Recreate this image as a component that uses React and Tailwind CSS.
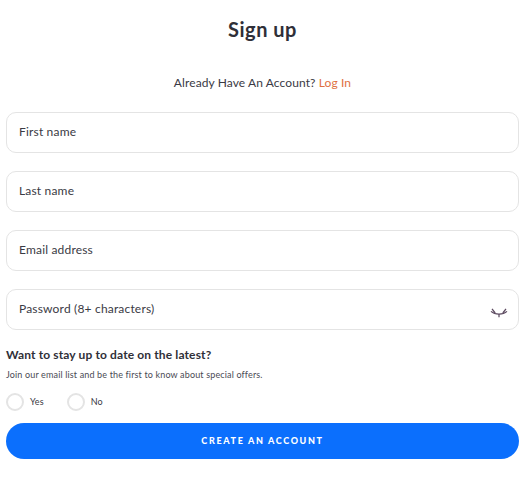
const font = "font-['Lato','Liberation_Sans',sans-serif]";

const Field = ({ label, children }) => {
  return (
    <div className="flex h-[41px] items-center justify-between rounded-[10px] border border-[#e4e4e4] bg-white pl-3 pr-2.5">
      <span className="pb-[2px] text-[12px] tracking-[0.18px] text-[#3a3a44]">{label}</span>
      {children}
    </div>
  );
};

const LashIcon = () => {
  return (
    <svg className="mt-[6px]" width="18" height="10" viewBox="0 0 18 10" fill="none" stroke="#5c4a60" strokeWidth="1.25">
      <path d="M1 3.4C5 7 13 7 17 3.4" />
      <path d="M2 0.8L5.2 5M16 0.8L12.8 5M9 6V9.2" />
    </svg>
  );
};

const Radio = ({ label }) => {
  return (
    <div className="flex items-center gap-[6px]">
      <div className="h-[18px] w-[18px] rounded-full border-2 border-[#e4e4e4] bg-white" />
      <span className="text-[9px] tracking-[0.15px] text-[#3a3a44]">{label}</span>
    </div>
  );
};

export default function App() {
  return (
    <div className={`${font} min-h-[489px] bg-white pr-[10px] pl-[6px] pt-[17px]`}>
      <h1 className="h-6 text-center text-[20px] leading-6 font-bold tracking-[0.5px] text-[#2f2f38]">Sign up</h1>
      <p className="mt-[34px] h-4 text-center text-[12px] leading-4 tracking-[0.1px] text-[#3a3a44]">
        Already Have An Account? <span className="text-[#e0703f]">Log In</span>
      </p>
      <div className="mt-[21px] flex flex-col gap-[18px]">
        <Field label="First name" />
        <Field label="Last name" />
        <Field label="Email address" />
        <Field label="Password (8+ characters)">
          <LashIcon />
        </Field>
      </div>
      <h2 className="mt-[17px] h-4 text-[12px] leading-4 font-bold tracking-[0.13px] text-[#2f2f38]">Want to stay up to date on the latest?</h2>
      <p className="mt-[6px] h-3 text-[9px] leading-3 tracking-[0.15px] text-[#4a4a54]">Join our email list and be the first to know about special offers.</p>
      <div className="mt-[12px] flex gap-[23px]">
        <Radio label="Yes" />
        <Radio label="No" />
      </div>
      <button className="mt-[12px] flex h-[36px] w-full items-center justify-center rounded-full bg-[#0b6ffd] text-[9px] font-black tracking-[1.65px] text-white">
        CREATE AN ACCOUNT
      </button>
    </div>
  );
}
